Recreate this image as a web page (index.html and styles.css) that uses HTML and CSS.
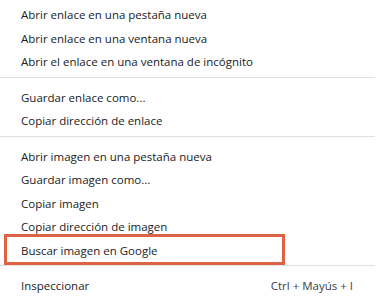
FILE: index.html
```html
<!DOCTYPE html>
<html lang="es">
<head>
<meta charset="utf-8">
<link rel="stylesheet" href="styles.css">
</head>
<body>
<div class="menu">
  <div class="item">Abrir enlace en una pestaña nueva</div>
  <div class="item">Abrir enlace en una ventana nueva</div>
  <div class="item">Abrir el enlace en una ventana de incógnito</div>
  <div class="sep"></div>
  <div class="item">Guardar enlace como...</div>
  <div class="item">Copiar dirección de enlace</div>
  <div class="sep"></div>
  <div class="item">Abrir imagen en una pestaña nueva</div>
  <div class="item">Guardar imagen como...</div>
  <div class="item">Copiar imagen</div>
  <div class="item">Copiar dirección de imagen</div>
  <div class="item highlighted">Buscar imagen en Google</div>
  <div class="sep"></div>
  <div class="item"><span>Inspeccionar</span><span class="shortcut">Ctrl + Mayús + I</span></div>
</div>
</body>
</html>
```
FILE: styles.css
```css
html, body {
  margin: 0;
  padding: 0;
  background: #ffffff;
}
body {
  width: 377px;
  height: 301px;
  overflow: hidden;
  font-family: "Open Sans", "Noto Sans", sans-serif;
  font-size: 11.5px;
  color: #202124;
}
.menu {
  display: flex;
  flex-direction: column;
  padding-top: 3px;
  width: 375px;
}
.item {
  height: 23.5px;
  display: flex;
  align-items: center;
  justify-content: space-between;
  padding-left: 21px;
  padding-right: 22px;
  position: relative;
  white-space: nowrap;
}
.sep {
  height: 1px;
  background: #e0e0e0;
  margin: 3px 0 8px 0;
}
.shortcut {
  color: #3c4043;
}
.highlighted::after {
  content: "";
  position: absolute;
  left: 4px;
  width: 275px;
  top: -5px;
  bottom: -3px;
  border: 3px solid #dc6444;
}
```
